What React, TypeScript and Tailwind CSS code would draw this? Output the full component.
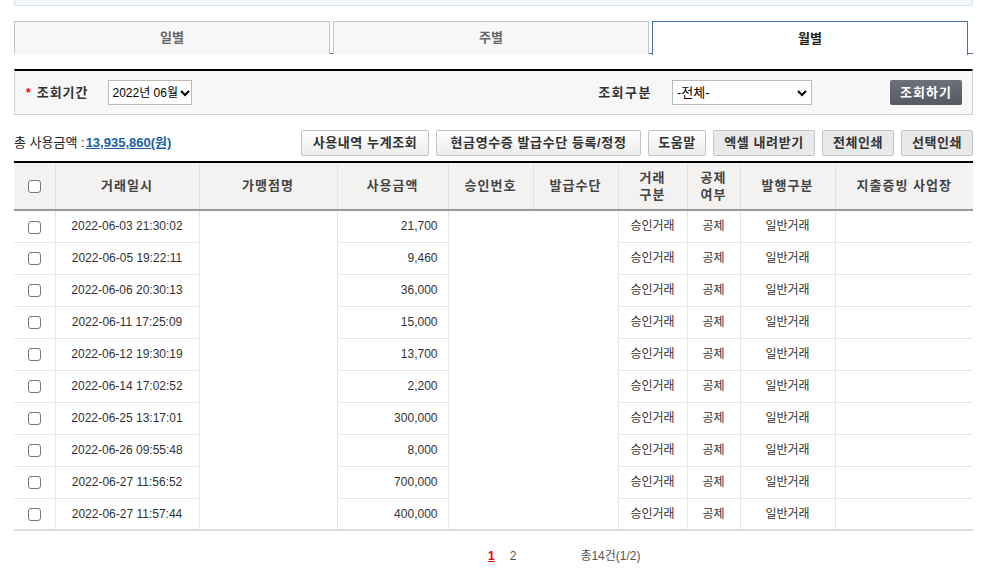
const rows = [
  { date: '2022-06-03 21:30:02', amount: '21,700' },
  { date: '2022-06-05 19:22:11', amount: '9,460' },
  { date: '2022-06-06 20:30:13', amount: '36,000' },
  { date: '2022-06-11 17:25:09', amount: '15,000' },
  { date: '2022-06-12 19:30:19', amount: '13,700' },
  { date: '2022-06-14 17:02:52', amount: '2,200' },
  { date: '2022-06-25 13:17:01', amount: '300,000' },
  { date: '2022-06-26 09:55:48', amount: '8,000' },
  { date: '2022-06-27 11:56:52', amount: '700,000' },
  { date: '2022-06-27 11:57:44', amount: '400,000' },
];

const font = { fontFamily: '"Liberation Sans", "Noto Sans CJK KR", sans-serif' };

function Checkbox() {
  return <span className="inline-block w-[13px] h-[13px] rounded-[3px] border border-[#767676] bg-white align-middle" />;
}

function Btn({ children, flat, w }: { children: React.ReactNode; flat?: boolean; w: string }) {
  return (
    <button
      className={
        w +
        ' h-[26px] px-0 whitespace-nowrap border border-[#c4c4c4] rounded-[2px] text-[13px] font-bold tracking-[0.6px] text-[#333] ' +
        (flat ? 'bg-[#e9e9e9]' : 'bg-gradient-to-b from-white to-[#ececec]')
      }
    >
      {children}
    </button>
  );
}

export default function App() {
  return (
    <div className="bg-white w-[993px] h-[574px] overflow-hidden text-[#333]" style={font}>
      <div className="ml-[14px] w-[959px]">
        <div className="h-[6px] bg-[#f4f7fb] border border-t-0 border-[#dfe4ec]" />

        {/* tabs */}
        <div className="mt-[15px] flex gap-[3px] border-b border-[#4a6fa5] h-[33px]">
          <div className="w-[316px] h-[33px] bg-[#f7f7f7] border border-[#c4c4c4] border-b-0 flex items-center justify-center text-[13px] font-bold text-[#666]">일별</div>
          <div className="w-[316px] h-[33px] bg-[#f7f7f7] border border-[#c4c4c4] border-b-0 flex items-center justify-center text-[13px] font-bold text-[#666]">주별</div>
          <div className="w-[316px] h-[34px] bg-white border border-[#4a6fa5] border-b-0 flex items-center justify-center text-[13px] font-bold text-[#222]">월별</div>
        </div>

        {/* search box */}
        <div className="mt-[15px] h-[46px] bg-[#f7f7f7] border border-[#cfcfcf] border-t-2 border-t-black flex items-center pl-[11px] pr-[10px]">
          <span className="text-[#e00] text-[12px] font-bold mr-[6px]">*</span>
          <span className="text-[13px] font-bold tracking-[1px] text-[#333]">조회기간</span>
          <div className="ml-[19px] w-[84px] h-[25px] bg-white border border-[#bbb] flex items-center justify-between pl-[4px] pr-[1px] text-[12px] text-black whitespace-nowrap">
            <span>2022년 06월</span>
            <svg width="10" height="8" viewBox="0 0 10 8" className="shrink-0"><path d="M1 2l4 4 4-4" stroke="#000" strokeWidth="2" fill="none" /></svg>
          </div>
          <span className="ml-auto text-[13px] font-bold tracking-[1.5px] text-[#333]">조회구분</span>
          <div className="ml-[20px] w-[140px] h-[25px] bg-white border border-[#bbb] flex items-center justify-between pl-[4px] pr-[4px] text-[13px] text-black">
            <span>-전체-</span>
            <svg width="10" height="8" viewBox="0 0 10 8"><path d="M1 2l4 4 4-4" stroke="#000" strokeWidth="2" fill="none" /></svg>
          </div>
          <button className="ml-[78px] w-[72px] h-[25px] rounded-[2px] bg-gradient-to-b from-[#6b7079] to-[#545962] text-white text-[13px] font-bold tracking-[1px]">조회하기</button>
        </div>

        {/* total + buttons */}
        <div className="mt-[15px] flex items-center">
          <span className="text-[13px] text-[#222]">총 사용금액 :</span>
          <a className="text-[13px] font-bold text-[#1a5fa8] underline ml-[1px]">13,935,860(원)</a>
          <div className="ml-auto flex gap-[7px]">
            <Btn w="w-[128px]">사용내역 누계조회</Btn>
            <Btn w="w-[205px]">현금영수증 발급수단 등록/정정</Btn>
            <Btn w="w-[58px]">도움말</Btn>
            <Btn w="w-[102px]" flat>엑셀 내려받기</Btn>
            <Btn w="w-[72px]" flat>전체인쇄</Btn>
            <Btn w="w-[72px]" flat>선택인쇄</Btn>
          </div>
        </div>

        {/* table */}
        <table className="mt-[5px] w-[959px] border-collapse table-fixed border-t-2 border-t-black border-b-2 border-b-[#ddd]">
          <colgroup>
            <col className="w-[41px]" />
            <col className="w-[144px]" />
            <col className="w-[138px]" />
            <col className="w-[111px]" />
            <col className="w-[85px]" />
            <col className="w-[85px]" />
            <col className="w-[69px]" />
            <col className="w-[53px]" />
            <col className="w-[95px]" />
            <col className="w-[138px]" />
          </colgroup>
          <thead>
            <tr className="h-[48px] bg-[#f3f2f1] text-[13px] font-bold text-[#444] border-b-2 border-b-[#999]">
              <th className="border-r border-[#e2e2e2]"><Checkbox /></th>
              <th className="border-r border-[#e2e2e2] tracking-[1px]">거래일시</th>
              <th className="border-r border-[#e2e2e2] tracking-[1px]">가맹점명</th>
              <th className="border-r border-[#e2e2e2] tracking-[1px]">사용금액</th>
              <th className="border-r border-[#e2e2e2] tracking-[1px]">승인번호</th>
              <th className="border-r border-[#e2e2e2] tracking-[1px]">발급수단</th>
              <th className="border-r border-[#e2e2e2] leading-[17px] tracking-[1px]">거래<br />구분</th>
              <th className="border-r border-[#e2e2e2] leading-[17px] tracking-[1px]">공제<br />여부</th>
              <th className="border-r border-[#e2e2e2] tracking-[1px]">발행구분</th>
              <th className="tracking-[1px]">지출증빙 사업장</th>
            </tr>
          </thead>
          <tbody className="text-[12px] text-[#333]">
            {rows.map((r, i) => {
              const last = i === rows.length - 1;
              const bb = last ? '' : ' border-b border-b-[#e6e6e6]';
              return (
                <tr key={i} className="h-[32px]">
                  <td className={'text-center border-r border-r-[#e6e6e6]' + bb}><Checkbox /></td>
                  <td className={'text-center border-r border-r-[#e6e6e6]' + bb}>{r.date}</td>
                  <td className="border-r border-r-[#e6e6e6] bg-white" />
                  <td className={'text-right pr-[10px] border-r border-r-[#e6e6e6]' + bb}>{r.amount}</td>
                  <td className="bg-white" />
                  <td className="border-r border-r-[#e6e6e6] bg-white" />
                  <td className={'text-center border-r border-r-[#e6e6e6]' + bb}>승인거래</td>
                  <td className={'text-center border-r border-r-[#e6e6e6]' + bb}>공제</td>
                  <td className={'text-center border-r border-r-[#e6e6e6]' + bb}>일반거래</td>
                  <td className={bb.trim()} />
                </tr>
              );
            })}
          </tbody>
        </table>

        {/* pagination */}
        <div className="mt-[16px] flex items-center text-[12px]">
          <span className="ml-[474px] text-[#e00] font-bold underline">1</span>
          <span className="ml-[15px] text-[#555]">2</span>
          <span className="ml-[64px] text-[#555]">총14건(1/2)</span>
        </div>
      </div>
    </div>
  );
}
